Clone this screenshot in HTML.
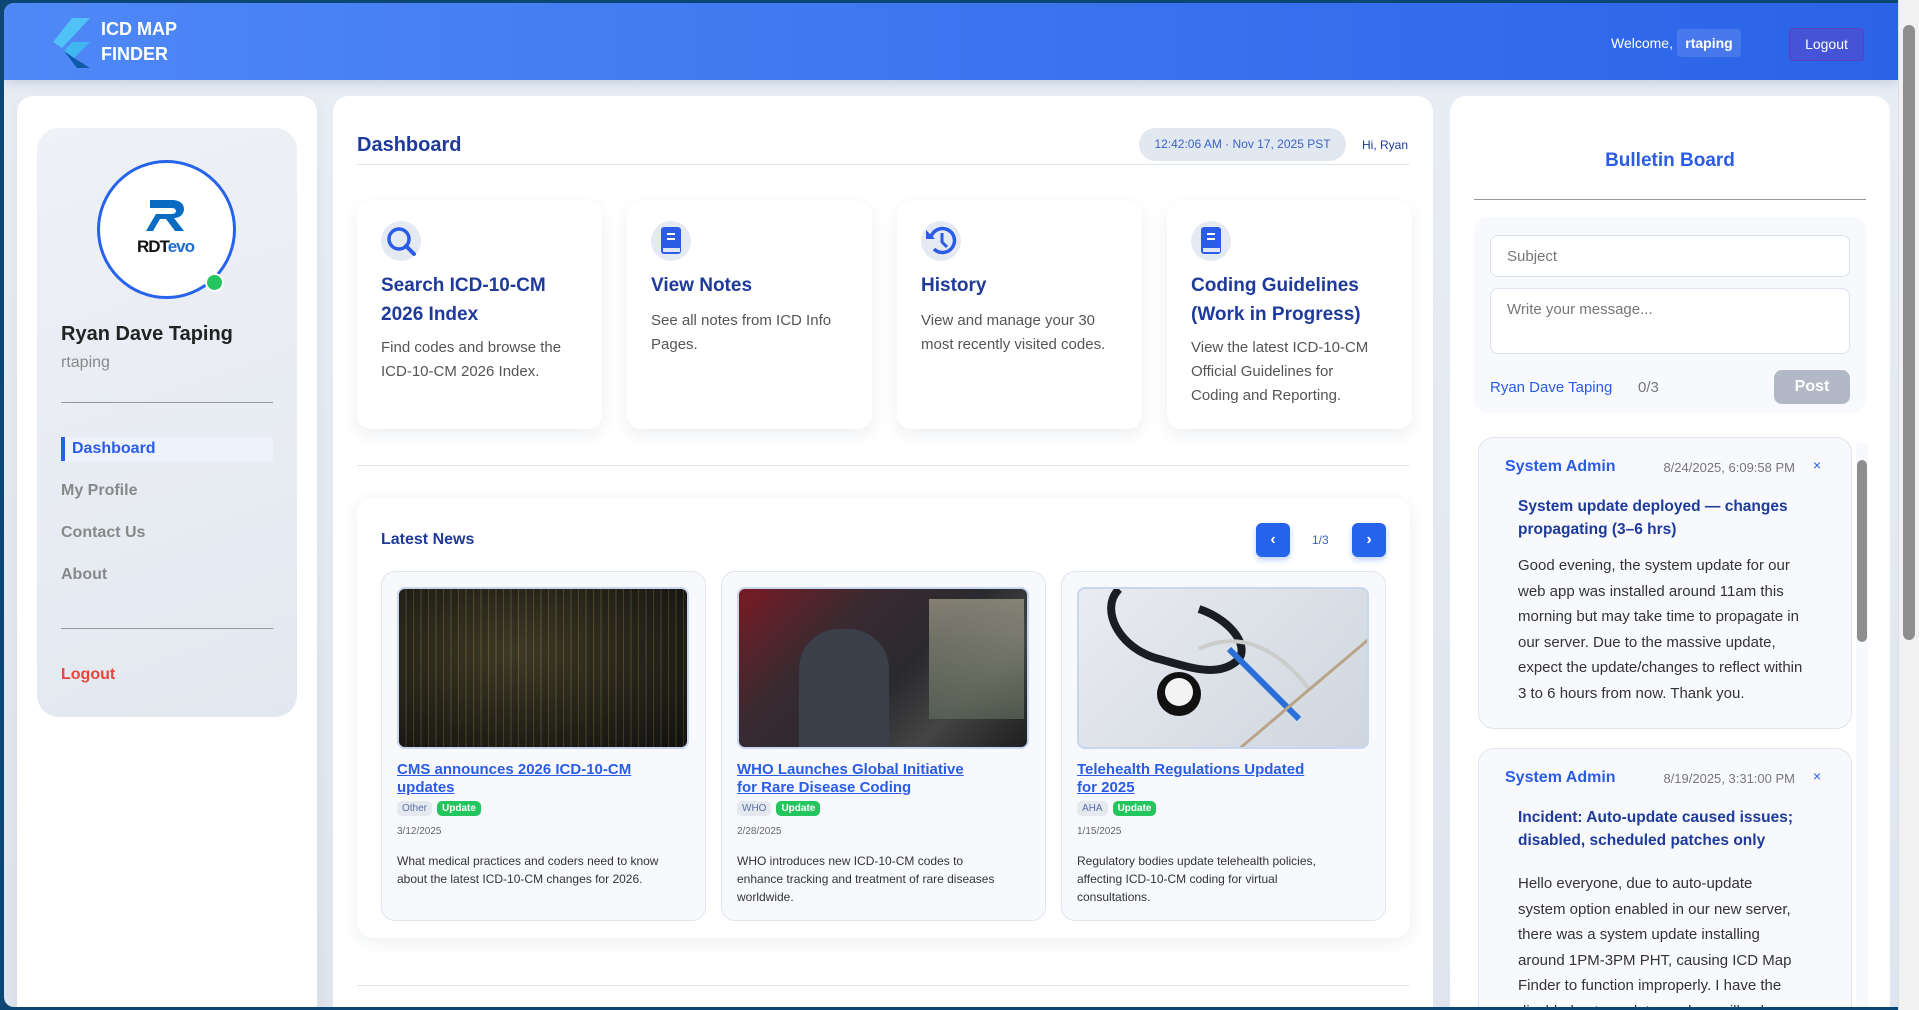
<!DOCTYPE html>
<html><head><meta charset="utf-8"><style>
*{box-sizing:border-box;margin:0;padding:0}
body{width:1919px;height:1010px;overflow:hidden;background:#0b4675;font-family:"Liberation Sans",sans-serif;position:relative}
.win{position:absolute;left:4px;top:3px;width:1894px;height:1004px;background:linear-gradient(180deg,#e9eef5,#dfe5ee);border-radius:10px 0 0 10px;overflow:hidden}
.hdr{position:absolute;left:0;top:0;width:1894px;height:77px;background:linear-gradient(90deg,#4f88f7,#2b63e8);box-shadow:0 4px 10px rgba(30,60,120,.15)}
.abs{position:absolute}
.card{position:absolute;background:#fff;border-radius:16px}
.sb{position:absolute;right:0;top:0;width:21px;height:1010px;background:#f1f1f1;border-left:1px solid #ddd}
.nav{position:absolute;left:57px;font-size:16px;color:#888;font-weight:bold}
.fc{position:absolute;top:198px;width:245px;height:228px;background:#fff;border-radius:14px;box-shadow:0 6px 16px rgba(30,50,90,.08)}
.fc .ic{position:absolute;left:24px;top:20px;width:40px;height:40px;border-radius:50%;background:#e5eaf2}
.fc h3{position:absolute;left:24px;top:70px;width:205px;font-size:19px;line-height:29px;color:#1e3a9a}
.fc p{position:absolute;left:24px;width:195px;font-size:15px;line-height:24px;color:#555}
.nc{position:absolute;top:568px;width:325px;height:350px;background:#f7f9fc;border:1px solid #e1e6ee;border-radius:14px}
.nc .img{position:absolute;left:15px;top:15px;width:292px;height:162px;border-radius:8px;border:2px solid #c8d6f0;overflow:hidden}
.nc .t{position:absolute;left:15px;top:189px;width:245px;font-size:15px;line-height:18px;font-weight:bold;color:#2b5ce6;text-decoration:underline}
.tags{position:absolute;left:15px;top:229px;display:flex;gap:5px}
.tag{height:15px;font-size:10px;line-height:15px;padding:0 5px;border-radius:5px}
.tg1{background:#e4e8ef;color:#5b6fa8}
.tg2{background:#22c55e;color:#fff;font-weight:bold}
.nc .d{position:absolute;left:15px;top:254px;font-size:10px;color:#666}
.nc .ds{position:absolute;left:15px;top:280px;width:262px;font-size:12px;line-height:18px;color:#333}
.post{position:absolute;left:1474px;width:374px;background:#f7f9fc;border:1px solid #e1e6ee;border-radius:16px}
.post .a{position:absolute;left:26px;top:20px;font-size:16px;font-weight:bold;color:#2b5ce6}
.post .dt{position:absolute;right:56px;top:22px;font-size:13px;color:#777}
.post .x{position:absolute;right:30px;top:19px;font-size:14px;color:#2b5ce6}
.post h4{position:absolute;left:39px;top:57px;width:300px;font-size:15.5px;line-height:23px;color:#1e3a9a}
.post p{position:absolute;left:39px;width:285px;font-size:15px;line-height:25.5px;color:#333}
</style></head><body>
<div class="win">
<div class="hdr">
 <svg class="abs" style="left:46px;top:12px" width="50" height="55" viewBox="0 0 50 55"><polygon points="22,3 40,3 12,33 3,27" fill="#4fc3f7"/><polygon points="22,27 40,27 24,43 14,36" fill="#40b7f0"/><polygon points="14,36 24,43 40,53 27,53" fill="#0d5aa8"/></svg>
 <div class="abs" style="left:97px;top:14px;color:#fff;font-weight:bold;font-size:18px;line-height:25px">ICD MAP<br>FINDER</div>
 <div class="abs" style="left:1607px;top:32px;color:#fff;font-size:14px">Welcome,</div>
 <div class="abs" style="left:1673px;top:26px;width:64px;height:28px;background:rgba(255,255,255,.12);border-radius:4px;color:#fff;font-weight:bold;font-size:14px;line-height:28px;text-align:center">rtaping</div>
 <div class="abs" style="left:1785px;top:25px;width:75px;height:33px;background:#4554d6;border:1px solid #5a3fc0;border-radius:4px;color:#fff;font-size:14px;line-height:31px;text-align:center">Logout</div>
</div>
<!-- left -->
<div class="card" style="left:13px;top:93px;width:300px;height:930px;box-shadow:0 4px 16px rgba(0,0,0,.05)"></div>
<div class="abs" style="left:33px;top:125px;width:260px;height:589px;border-radius:22px;background:linear-gradient(160deg,#eef1f6,#e3e8f0)"></div>
<div class="abs" style="left:93px;top:157px;width:139px;height:139px;border-radius:50%;border:3px solid #2563eb;background:#fff"></div>
<svg class="abs" style="left:142px;top:194px" width="42" height="36" viewBox="0 0 42 36"><path d="M4 3h22c9 0 12 5 12 9s-3 9-10 9l10 13h-9l-9-12h-6l-7 12H0l7-12h0l3-5h16c3 0 4-2 4-3s-1-3-4-3H4z" fill="#0a6bc2"/></svg>
<div class="abs" style="left:133px;top:234px;font-size:17px;font-weight:bold;letter-spacing:-1px;color:#111">RDT<span style="color:#1a6fd0">evo</span></div>
<div class="abs" style="left:201px;top:270px;width:19px;height:19px;border-radius:50%;background:#22c55e;border:2px solid #fff"></div>
<div class="abs" style="left:57px;top:320px;font-size:20px;font-weight:bold;color:#222">Ryan Dave Taping</div>
<div class="abs" style="left:57px;top:351px;font-size:16px;color:#888">rtaping</div>
<div class="abs" style="left:57px;top:399px;width:212px;height:1px;background:#999"></div>
<div class="abs" style="left:57px;top:434px;width:212px;height:24px;background:#eef2fa;border-left:4px solid #2563eb"></div>
<div class="nav" style="left:68px;top:437px;color:#2b5ce6">Dashboard</div>
<div class="nav" style="top:479px">My Profile</div>
<div class="nav" style="top:521px">Contact Us</div>
<div class="nav" style="top:563px">About</div>
<div class="abs" style="left:57px;top:625px;width:212px;height:1px;background:#999"></div>
<div class="nav" style="top:663px;color:#e8453c">Logout</div>
<!-- main -->
<div class="card" style="left:329px;top:93px;width:1100px;height:930px"></div>
<div class="abs" style="left:353px;top:131px;font-size:20px;font-weight:bold;color:#1e3a9a">Dashboard</div>
<div class="abs" style="left:1135px;top:125px;width:207px;height:33px;border-radius:17px;background:#e2e8f0;color:#3a63c8;font-size:12px;line-height:33px;text-align:center">12:42:06 AM · Nov 17, 2025 PST</div>
<div class="abs" style="left:1358px;top:135px;font-size:12px;color:#1e3a9a">Hi, Ryan</div>
<div class="abs" style="left:353px;top:161px;width:1053px;height:1px;background:#dfe6f0"></div>
<div class="fc" style="left:353px"><div class="ic"><svg width="40" height="40"><circle cx="18" cy="18" r="10" fill="none" stroke="#2b5ce6" stroke-width="3.5"/><path d="M25 25l8 8" stroke="#2b5ce6" stroke-width="4" stroke-linecap="round"/></svg></div><h3>Search ICD-10-CM 2026 Index</h3><p style="top:135px">Find codes and browse the ICD-10-CM 2026 Index.</p></div>
<div class="fc" style="left:623px"><div class="ic"><svg width="40" height="40"><rect x="10" y="6" width="20" height="27" rx="3" fill="#2b5ce6"/><rect x="12" y="27" width="17" height="4" fill="#dde5f5"/><path d="M16 13h8M16 18h8" stroke="#fff" stroke-width="2"/></svg></div><h3>View Notes</h3><p style="top:108px">See all notes from ICD Info Pages.</p></div>
<div class="fc" style="left:893px"><div class="ic"><svg width="40" height="40"><path d="M10 16a12 12 0 1 1 3 12" fill="none" stroke="#2b5ce6" stroke-width="3.5"/><path d="M5 9v9h9z" fill="#2b5ce6"/><path d="M21 12v9l5 5" stroke="#2b5ce6" stroke-width="3" fill="none"/></svg></div><h3>History</h3><p style="top:108px">View and manage your 30 most recently visited codes.</p></div>
<div class="fc" style="left:1163px"><div class="ic"><svg width="40" height="40"><rect x="10" y="6" width="20" height="27" rx="3" fill="#2b5ce6"/><rect x="12" y="27" width="17" height="4" fill="#dde5f5"/><path d="M16 13h8M16 18h8" stroke="#fff" stroke-width="2"/></svg></div><h3>Coding Guidelines (Work in Progress)</h3><p style="top:135px;width:180px">View the latest ICD-10-CM Official Guidelines for Coding and Reporting.</p></div>
<div class="abs" style="left:353px;top:462px;width:1053px;height:1px;background:#dfe6f0"></div>
<div class="abs" style="left:353px;top:495px;width:1053px;height:440px;border-radius:16px;background:#fff;box-shadow:0 4px 18px rgba(30,50,90,.08)"></div>
<div class="abs" style="left:377px;top:528px;font-size:16px;font-weight:bold;color:#1e3a9a">Latest News</div>
<div class="abs" style="left:1252px;top:520px;width:34px;height:34px;border-radius:6px;background:#2563eb;color:#fff;text-align:center;line-height:34px;font-weight:bold;box-shadow:0 3px 6px rgba(37,99,235,.3)">‹</div>
<div class="abs" style="left:1308px;top:530px;font-size:12px;color:#3a63c8">1/3</div>
<div class="abs" style="left:1348px;top:520px;width:34px;height:34px;border-radius:6px;background:#2563eb;color:#fff;text-align:center;line-height:34px;font-weight:bold;box-shadow:0 3px 6px rgba(37,99,235,.3)">›</div>
<div class="nc" style="left:377px"><div class="img" style="background:repeating-linear-gradient(90deg,#1d1d1a 0 6px,#3b3a2a 6px 8px,#1a1a18 8px 14px,#5a4d2a 14px 15px);"><div style="position:absolute;inset:0;background:radial-gradient(ellipse at 40% 40%,rgba(120,110,60,.35),rgba(0,0,0,.4))"></div></div><div class="t">CMS announces 2026 ICD-10-CM updates</div><div class="tags"><span class="tag tg1">Other</span><span class="tag tg2">Update</span></div><div class="d">3/12/2025</div><div class="ds">What medical practices and coders need to know about the latest ICD-10-CM changes for 2026.</div></div>
<div class="nc" style="left:717px"><div class="img" style="background:linear-gradient(135deg,#7a1a25 0%,#3a2a30 30%,#2a2a2e 55%,#444 75%,#1e1e1e 100%)"><div style="position:absolute;left:190px;top:10px;width:95px;height:120px;background:linear-gradient(#a7a290,#5e6a5a);opacity:.7"></div><div style="position:absolute;left:60px;top:40px;width:90px;height:120px;border-radius:40px 40px 0 0;background:#3b3f4a"></div></div><div class="t">WHO Launches Global Initiative for Rare Disease Coding</div><div class="tags"><span class="tag tg1">WHO</span><span class="tag tg2">Update</span></div><div class="d">2/28/2025</div><div class="ds">WHO introduces new ICD-10-CM codes to enhance tracking and treatment of rare diseases worldwide.</div></div>
<div class="nc" style="left:1057px"><div class="img" style="background:linear-gradient(135deg,#e9ecf1,#cfd6de)"><svg width="292" height="162" style="position:absolute;left:0;top:0"><path d="M40 0c-20 20 0 60 40 70c30 8 60 20 80 0c10-15-10-40-40-50" fill="none" stroke="#1a1d22" stroke-width="8"/><path d="M120 60c40-20 80 0 110 40" fill="none" stroke="#ccc" stroke-width="4"/><path d="M150 60l70 70" stroke="#2a6ed8" stroke-width="6"/><circle cx="100" cy="105" r="22" fill="#111"/><circle cx="100" cy="103" r="14" fill="#f3f3f3"/><path d="M160 160l130-110" stroke="#b9a48a" stroke-width="3"/></svg></div><div class="t">Telehealth Regulations Updated for 2025</div><div class="tags"><span class="tag tg1">AHA</span><span class="tag tg2">Update</span></div><div class="d">1/15/2025</div><div class="ds">Regulatory bodies update telehealth policies, affecting ICD-10-CM coding for virtual consultations.</div></div>
<div class="abs" style="left:353px;top:982px;width:1053px;height:1px;background:#dfe6f0"></div>
<!-- right -->
<div class="card" style="left:1446px;top:93px;width:440px;height:930px"></div>
<div class="abs" style="left:1446px;top:147px;width:440px;text-align:center;font-size:19px;font-weight:bold;color:#2b5ce6">Bulletin Board</div>
<div class="abs" style="left:1470px;top:196px;width:392px;height:1px;background:#999"></div>
<div class="abs" style="left:1470px;top:214px;width:392px;height:196px;border-radius:14px;background:#f7f9fc"></div>
<div class="abs" style="left:1486px;top:232px;width:360px;height:42px;border:1px solid #dde3ec;border-radius:8px;background:#fff;padding:12px 16px;font-size:15px;color:#777">Subject</div>
<div class="abs" style="left:1486px;top:285px;width:360px;height:66px;border:1px solid #dde3ec;border-radius:8px;background:#fff;padding:12px 16px;font-size:15px;color:#777">Write your message...</div>
<div class="abs" style="left:1486px;top:376px;font-size:15px;color:#2b5ce6">Ryan Dave Taping</div>
<div class="abs" style="left:1634px;top:376px;font-size:15px;color:#777">0/3</div>
<div class="abs" style="left:1770px;top:367px;width:76px;height:34px;border-radius:8px;background:#b2b8c6;color:#fff;font-weight:bold;font-size:16px;text-align:center;line-height:34px">Post</div>
<div class="post" style="top:434px;height:292px"><div class="a">System Admin</div><div class="dt">8/24/2025, 6:09:58 PM</div><div class="x">×</div><h4>System update deployed — changes propagating (3–6 hrs)</h4><p style="top:115px">Good evening, the system update for our web app was installed around 11am this morning but may take time to propagate in our server. Due to the massive update, expect the update/changes to reflect within 3 to 6 hours from now. Thank you.</p></div>
<div class="post" style="top:745px;height:300px"><div class="a">System Admin</div><div class="dt">8/19/2025, 3:31:00 PM</div><div class="x">×</div><h4>Incident: Auto-update caused issues; disabled, scheduled patches only</h4><p style="top:122px">Hello everyone, due to auto-update system option enabled in our new server, there was a system update installing around 1PM-3PM PHT, causing ICD Map Finder to function improperly. I have the disabled auto-update, and we will only update and apply</p></div>
<div class="abs" style="left:1852px;top:440px;width:12px;height:564px;background:#f7f9fc"></div>
<div class="abs" style="left:1853px;top:457px;width:10px;height:182px;border-radius:5px;background:#8e8e8e"></div>
</div>
<div class="sb"><div style="position:absolute;left:4px;top:25px;width:12px;height:615px;border-radius:6px;background:#8e8e8e"></div></div>
</body></html>
